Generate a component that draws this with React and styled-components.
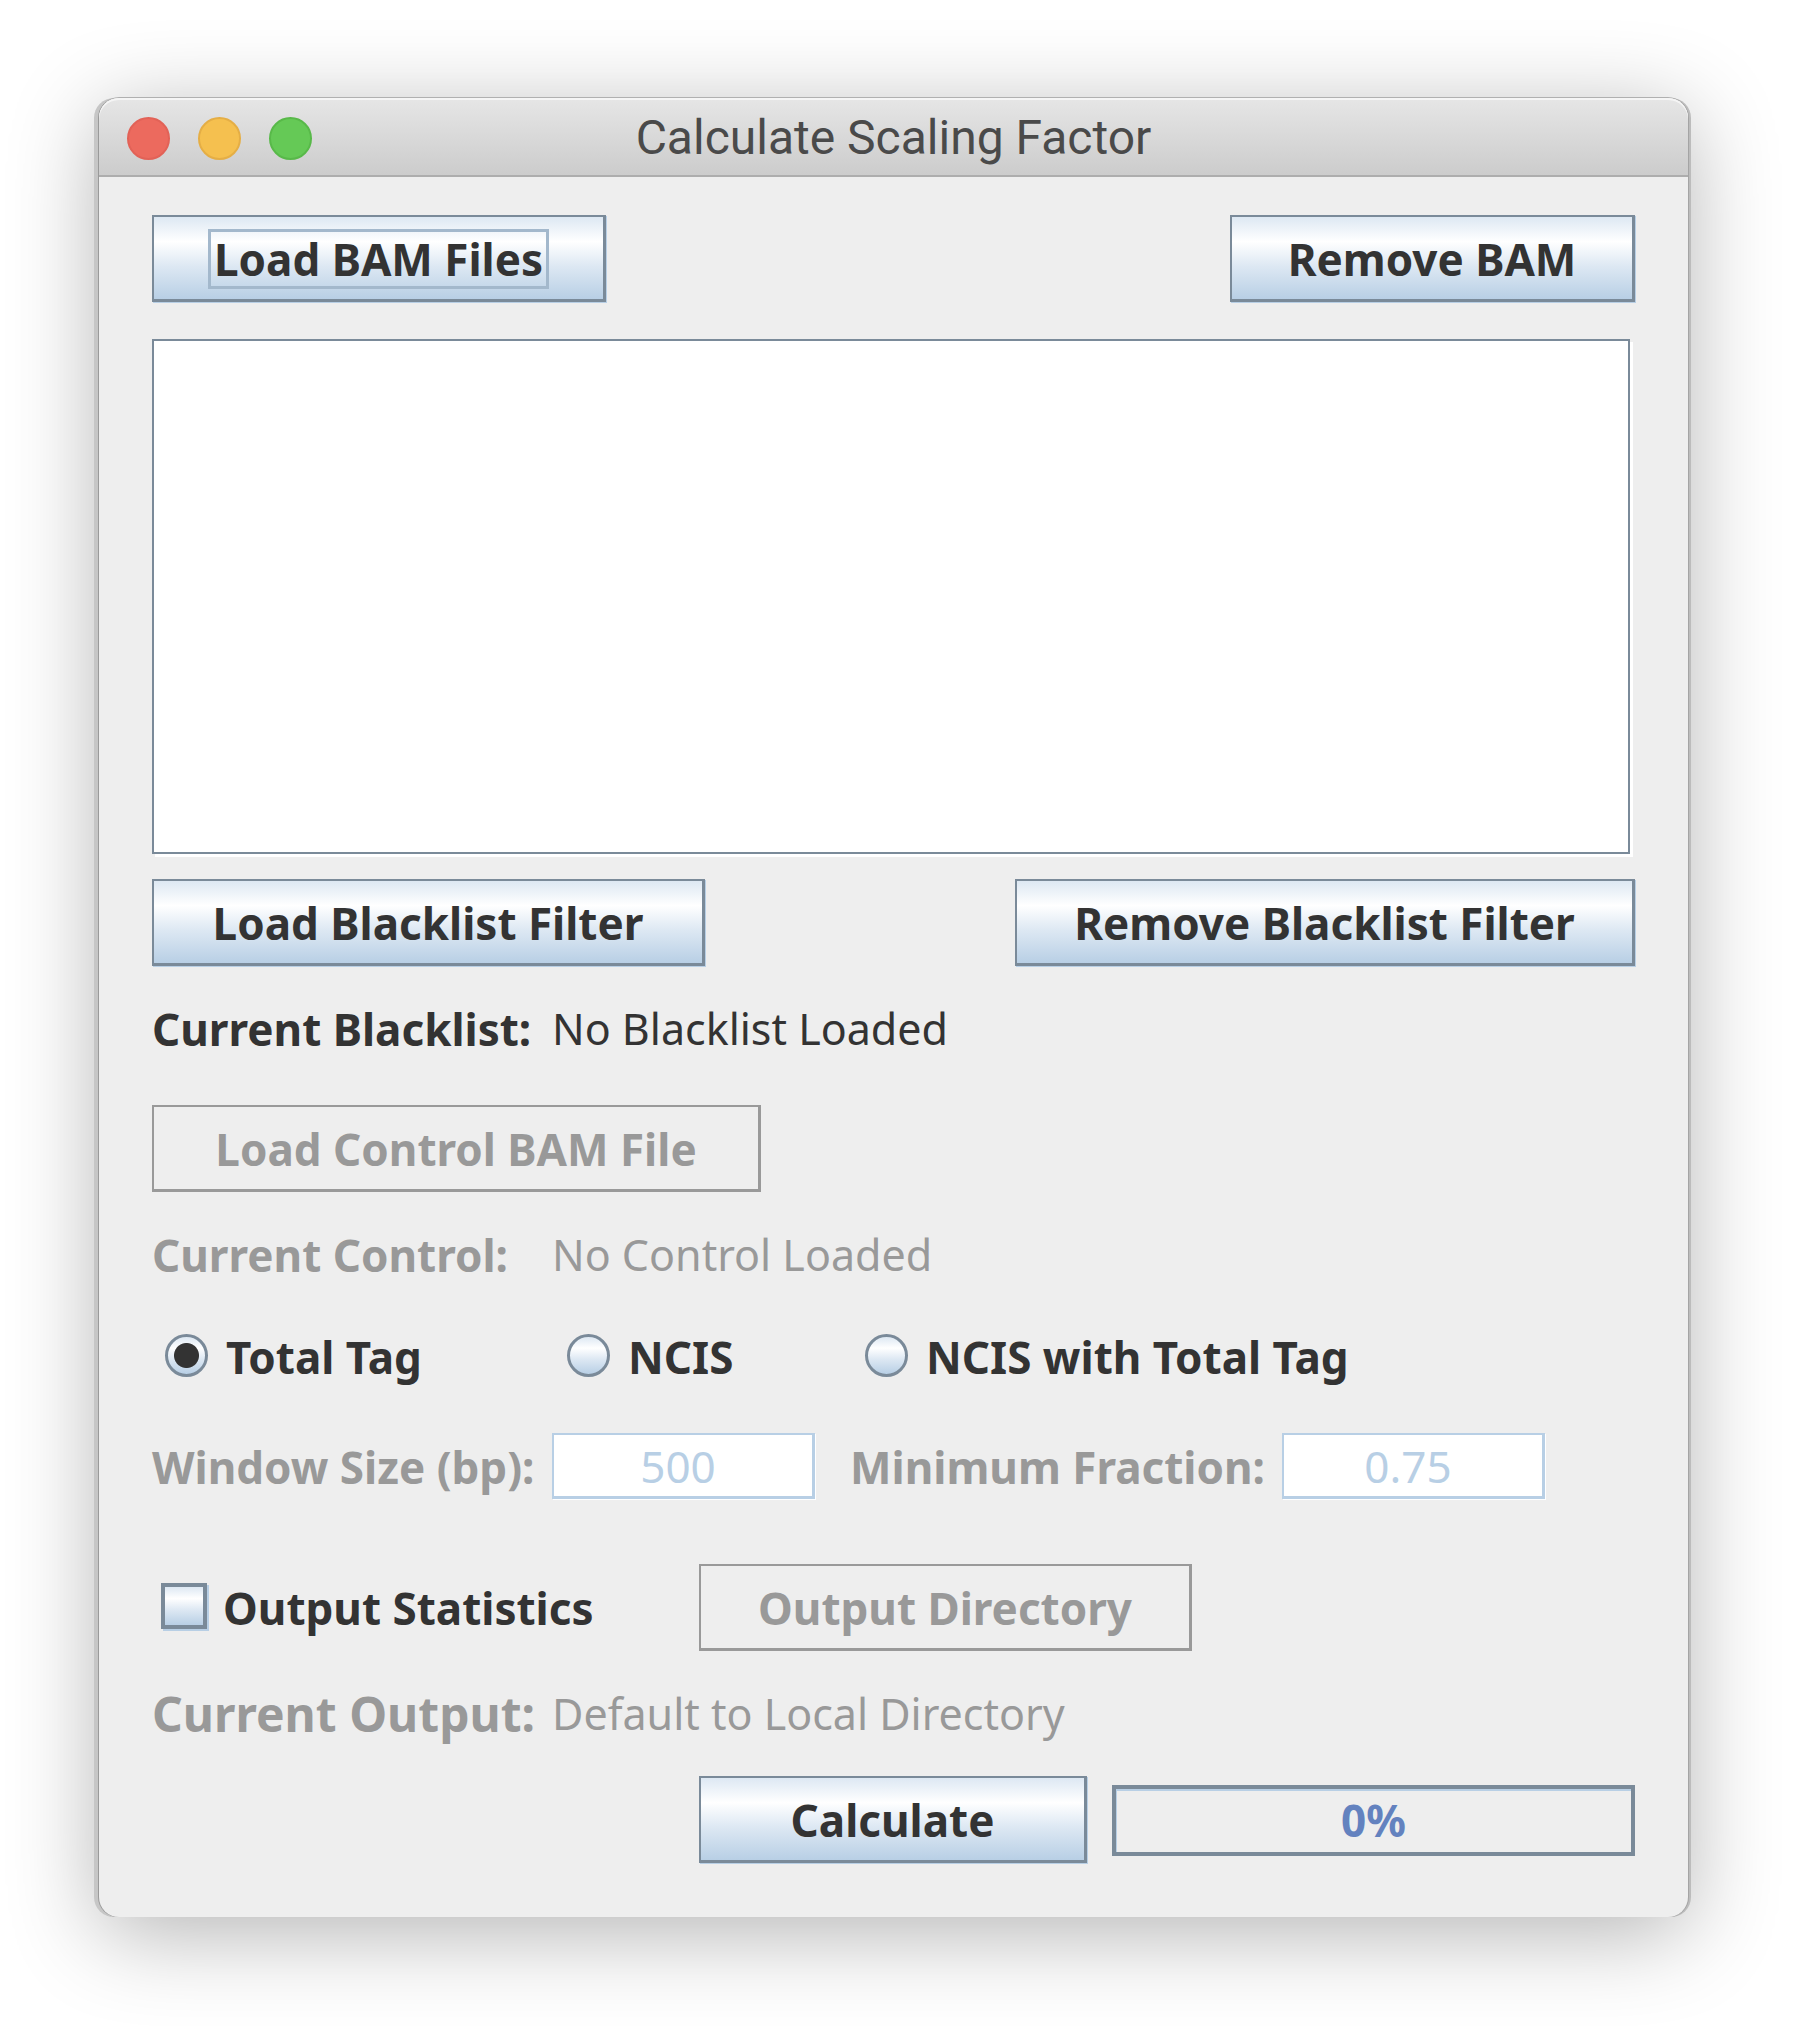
import React, { useState } from "react";
import styled, { createGlobalStyle, css } from "styled-components";

const ink = "#333333";
const muted = "#999999";
const steel = "#7a8a99";
const sky = "#b8cfe5";
const metal = "linear-gradient(#dde8f3 0%, #ffffff 30%, #dde8f3 60%, #b8cfe5 100%)";

const GlobalStyle = createGlobalStyle`
  * { box-sizing: border-box; }
  body { margin: 0; background: #ffffff; }
  body, button, input, select {
    font-family: "Noto Sans", "Open Sans", sans-serif;
    font-size: 44px;
    line-height: 60px;
  }
`;

const Desktop = styled.main`
  padding: 98px 112px 109px 99px;
`;

const Window = styled.section`
  border-radius: 20px;
  background: #eeeeee;
  color: ${ink};
  box-shadow:
    -1px 0 0 #9a9a9a,
    1px 0 0 #a4a4a4,
    0 -1px 0 #b0b0b0,
    -5px 0 0 #c6c6c6,
    3px 0 0 #bcbcbc,
    0 16px 90px rgba(0, 0, 0, 0.3);
`;

const TitleBar = styled.header`
  display: grid;
  grid-template-columns: 1fr auto 1fr;
  align-items: center;
  height: 79px;
  padding: 3px 28px 0;
  border-radius: 20px 20px 0 0;
  border-bottom: 2px solid #adadad;
  background: linear-gradient(#e6e6e6, #cccccc);
  box-shadow: inset 0 2px 0 #f5f5f5;
`;

const Lights = styled.div`
  display: flex;
  gap: 28px;
`;

const Light = styled.button`
  width: 43px;
  height: 43px;
  padding: 0;
  border: 2px solid ${(p) => p.$edge};
  border-radius: 50%;
  background: ${(p) => p.$fill};
`;

const Title = styled.h1`
  margin: 0;
  font: 400 48px/60px Roboto, sans-serif;
  color: #4a4a4a;
`;

const Form = styled.form`
  display: flex;
  flex-direction: column;
  padding: 38px 53px 53px;
`;

const Row = styled.div`
  display: flex;
  align-items: center;
  justify-content: ${(p) => (p.$spread ? "space-between" : "flex-start")};
  gap: 25px;
  margin-top: ${(p) => p.$top || 0}px;
  padding-left: ${(p) => p.$indent || 0}px;
`;

const Columns = styled.div`
  display: grid;
  grid-template-columns: ${(p) => p.$columns};
  align-items: center;
  margin-top: ${(p) => p.$top}px;
`;

const Button = styled.button`
  min-width: ${(p) => p.$width}px;
  height: 87px;
  margin-bottom: 1px;
  padding: 2px 0 0;
  justify-self: start;
  border: solid ${steel};
  border-width: 2px 3px 3px 2px;
  background: ${metal};
  box-shadow: 1px 1px 0 ${sky};
  color: ${ink};
  font-weight: 700;
  white-space: nowrap;
  &:disabled {
    border-color: ${muted};
    background: none;
    box-shadow: none;
    color: ${muted};
  }
`;

const FocusRing = styled.span`
  display: inline-block;
  padding: 0 3px;
  line-height: 54px;
  outline: 3px solid #a3b8cc;
`;

const FileList = styled.select`
  appearance: none;
  height: 515px;
  margin: 36px 5px 3px 0;
  border: 2px solid ${steel};
  border-radius: 0;
  background: #ffffff;
  box-shadow: 3px 3px 0 #ffffff;
  outline: none;
`;

const Caption = styled.label`
  font-weight: 700;
  font-size: ${(p) => (p.$large ? 48 : 44)}px;
  color: ${(p) => (p.$muted ? muted : ink)};
  padding-left: ${(p) => (p.$gap ? 35 : 0)}px;
  white-space: nowrap;
`;

const Value = styled.output`
  font-size: 43px;
  color: ${(p) => (p.$muted ? muted : ink)};
  white-space: nowrap;
`;

const Choice = styled.label`
  display: flex;
  align-items: center;
  gap: ${(p) => (p.$square ? 16 : 18)}px;
  padding-left: ${(p) => (p.$square ? 9 : 13)}px;
  font-weight: 700;
  white-space: nowrap;
`;

const mark = css`
  appearance: none;
  flex: none;
  margin: 0 0 4px;
  background: ${metal};
`;

const Radio = styled.input.attrs({ type: "radio" })`
  ${mark}
  width: 43px;
  height: 43px;
  border: 3px solid ${steel};
  border-radius: 50%;
  &:checked {
    background: radial-gradient(circle, ${ink} 12px, transparent 13px), ${metal};
  }
`;

const Checkbox = styled.input.attrs({ type: "checkbox" })`
  ${mark}
  width: 46px;
  height: 46px;
  border: 4px solid ${steel};
  box-shadow: 2px 2px 0 ${sky};
  &:checked {
    background: ${steel};
  }
`;

const Field = styled.input.attrs({ type: "text" })`
  width: 100%;
  height: 66px;
  margin: 0 0 1px;
  padding: 0 10px 0 0;
  border: solid ${sky};
  border-width: 2px 3px 3px 2px;
  border-radius: 0;
  background: #ffffff;
  box-shadow: 1px 1px 0 #ffffff;
  text-align: center;
  &:disabled {
    color: ${sky};
  }
`;

const Progress = styled.div`
  flex: 1;
  height: 71px;
  border: 4px solid ${steel};
  box-shadow: inset 1px 2px 0 ${sky};
  color: #6382bf;
  font-weight: 700;
  text-align: center;
  line-height: 63px;
`;

const lights = [
  { name: "Close", fill: "#ec6a5e", edge: "#e26257" },
  { name: "Minimize", fill: "#f5c04f", edge: "#e5ae45" },
  { name: "Zoom", fill: "#65c956", edge: "#58b949" },
];

const methods = ["Total Tag", "NCIS", "NCIS with Total Tag"];

export default function App() {
  const [method, setMethod] = useState(methods[0]);
  const [stats, setStats] = useState(false);
  const byTag = method === "Total Tag";

  return (
    <>
      <GlobalStyle />
      <Desktop>
        <Window>
          <TitleBar>
            <Lights>
              {lights.map((l) => (
                <Light key={l.name} aria-label={l.name} $fill={l.fill} $edge={l.edge} />
              ))}
            </Lights>
            <Title>Calculate Scaling Factor</Title>
          </TitleBar>
          <Form onSubmit={(e) => e.preventDefault()}>
            <Row $spread>
              <Button type="button" $width={454}>
                <FocusRing>Load BAM Files</FocusRing>
              </Button>
              <Button type="button" $width={405}>Remove BAM</Button>
            </Row>
            <FileList multiple aria-label="BAM files" />
            <Row $spread $top={22}>
              <Button type="button" $width={553}>Load Blacklist Filter</Button>
              <Button type="button" $width={620}>Remove Blacklist Filter</Button>
            </Row>
            <Columns $top={32} $columns="400px 1fr">
              <Caption htmlFor="blacklist">Current Blacklist:</Caption>
              <Value id="blacklist">No Blacklist Loaded</Value>
            </Columns>
            <Row $top={46}>
              <Button type="button" $width={609} disabled={byTag}>Load Control BAM File</Button>
            </Row>
            <Columns $top={32} $columns="400px 1fr">
              <Caption htmlFor="control" $muted>Current Control:</Caption>
              <Value id="control" $muted>No Control Loaded</Value>
            </Columns>
            <Columns $top={42} $columns="402px 298px 1fr">
              {methods.map((m) => (
                <Choice key={m}>
                  <Radio name="method" checked={method === m} onChange={() => setMethod(m)} />
                  {m}
                </Choice>
              ))}
            </Columns>
            <Columns $top={46} $columns="400px 263px 467px 263px">
              <Caption htmlFor="window-size" $muted>Window Size (bp):</Caption>
              <Field id="window-size" defaultValue="500" disabled={byTag} />
              <Caption htmlFor="fraction" $muted $gap>Minimum Fraction:</Caption>
              <Field id="fraction" defaultValue="0.75" disabled={byTag} />
            </Columns>
            <Columns $top={64} $columns="547px 1fr">
              <Choice $square>
                <Checkbox checked={stats} onChange={(e) => setStats(e.target.checked)} />
                Output Statistics
              </Choice>
              <Button type="button" $width={493} disabled={!stats}>Output Directory</Button>
            </Columns>
            <Columns $top={32} $columns="400px 1fr">
              <Caption htmlFor="output" $muted $large>Current Output:</Caption>
              <Value id="output" $muted>Default to Local Directory</Value>
            </Columns>
            <Row $top={32} $indent={547}>
              <Button type="submit" $width={388}>Calculate</Button>
              <Progress role="progressbar" aria-label="Progress" aria-valuenow={0} aria-valuemin={0} aria-valuemax={100}>
                0%
              </Progress>
            </Row>
          </Form>
        </Window>
      </Desktop>
    </>
  );
}
